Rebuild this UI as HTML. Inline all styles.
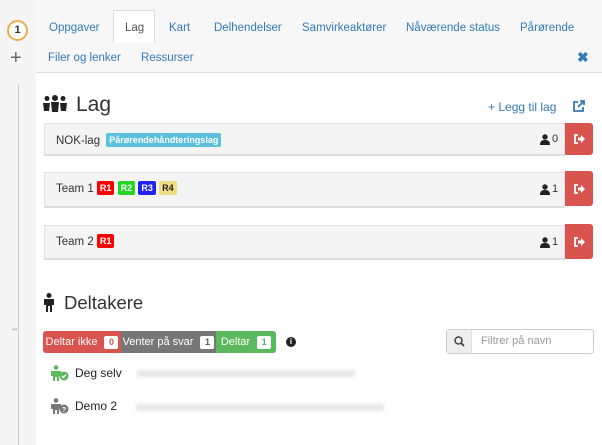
<!DOCTYPE html>
<html><head><meta charset="utf-8"><style>
*{box-sizing:border-box;margin:0;padding:0}
body{width:602px;height:445px;overflow:hidden;background:#fff;font-family:"Liberation Sans",Arial,sans-serif;position:relative;color:#333}
.a{position:absolute}
.side{left:0;top:0;width:36px;height:445px;background:#f5f5f5}
.hdr{left:36px;top:0;width:566px;height:73px;background:#f7f7f7;border-bottom:1px solid #ddd}
.tab{font-size:11.5px;color:#337ab7;top:22px;white-space:nowrap}
.row{left:44px;width:521px;background:#f4f4f4;border:1px solid #e3e3e3;border-bottom:2px solid #ddd}
.btn{left:565px;width:28px;background:#d9534f;border-radius:0 3px 3px 0;display:flex;align-items:center;justify-content:center}
.lbl{color:#fff;font-size:9px;font-weight:bold;border-radius:2px;padding:2px 3px;display:inline-block;vertical-align:1px;line-height:10px}
.rt{font-size:11.5px;color:#333;white-space:nowrap}
.cnt{font-size:11px;left:540px;display:flex;align-items:center;gap:2px}
.blur{height:7px;background:#e8e8e8;filter:blur(1.5px)}
.seg{display:flex;align-items:center;justify-content:center;gap:7px;white-space:nowrap}
.bg{display:inline-block;background:#fff;color:#555;font-size:9px;font-weight:bold;width:14px;height:13px;line-height:13px;text-align:center;border-radius:2px}
</style></head><body>
<div class="a side"></div>
<div class="a" style="left:18px;top:84px;width:1px;height:361px;background:#ccc"></div>
<div class="a" style="left:7px;top:20px;width:21px;height:21px;border:2px solid #f0ad4e;border-radius:50%;background:#fff;font-size:11px;font-weight:bold;text-align:center;line-height:17px">1</div>
<div class="a" style="left:10px;top:48px;font-size:20px;color:#666;line-height:20px">+</div>
<div class="a" style="left:12px;top:325px;font-size:8px;color:#bbb">••</div>
<div class="a hdr"></div>
<div class="a" style="left:113px;top:10px;width:42px;height:33px;background:#fff;border:1px solid #ddd;border-bottom:none"></div>
<div class="a tab" style="left:49px">Oppgaver</div>
<div class="a tab" style="left:125px;color:#555">Lag</div>
<div class="a tab" style="left:169px">Kart</div>
<div class="a tab" style="left:214px">Delhendelser</div>
<div class="a tab" style="left:302px">Samvirkeaktører</div>
<div class="a tab" style="left:406px">Nåværende status</div>
<div class="a tab" style="left:520px">Pårørende</div>
<div class="a tab" style="left:48px;top:52px">Filer og lenker</div>
<div class="a tab" style="left:141px;top:52px">Ressurser</div>
<div class="a" style="left:577px;top:49px;color:#337ab7;font-size:14px;font-weight:bold">✖</div>
<svg class="a" style="left:43px;top:95px" width="24" height="17" viewBox="0 0 24 17"><g fill="#222"><circle cx="4" cy="3.5" r="2.5"/><circle cx="12" cy="3" r="3"/><circle cx="20" cy="3.5" r="2.5"/><path d="M0 8h7l-1 8H1zM17 8h7l-1 8h-5zM8 7h8l-1 10H9z"/></g></svg>
<div class="a" style="left:76px;top:93px;font-size:21px">Lag</div>
<div class="a" style="left:488px;top:100px;font-size:12px;color:#337ab7">+ Legg til lag</div>
<svg class="a" style="left:572px;top:100px" width="13" height="13" viewBox="0 0 13 13" fill="none" stroke="#337ab7" stroke-width="1.8"><path d="M6 2H2v9h9V7"/><path d="M6 7l6-6M8 1h4v4"/></svg>
<svg width="0" height="0" style="position:absolute"><defs>
<g id="u"><circle cx="5" cy="3" r="2.7" fill="#222"/><path d="M0 11c0-4 2-5 5-5s5 1 5 5z" fill="#222"/></g>
<g id="x"><path d="M5 2H2v8h3" stroke="#fff" stroke-width="1.8" fill="none"/><path d="M5 4.5h3V2l4 4-4 4V7.5H5z" fill="#fff"/></g></defs></svg>
<div class="a row" style="top:123px;height:33px"></div>
<div class="a rt" style="left:56px;top:133px">NOK-lag <span class="lbl" style="background:#5bc0de;margin-left:3px">Pårørendehåndteringslag</span></div>
<div class="a cnt" style="top:133px"><svg width="10" height="11"><use href="#u"/></svg>0</div>
<div class="a btn" style="top:123px;height:32px"><svg width="13" height="12"><use href="#x"/></svg></div>
<div class="a row" style="top:172px;height:36px"></div>
<div class="a rt" style="left:56px;top:181px">Team 1 <span class="lbl" style="background:#f00">R1</span> <span class="lbl" style="background:#1fd81f">R2</span> <span class="lbl" style="background:#2222ee">R3</span> <span class="lbl" style="background:#f0dc82;color:#222">R4</span></div>
<div class="a cnt" style="top:183px"><svg width="10" height="11"><use href="#u"/></svg>1</div>
<div class="a btn" style="top:171px;height:35px"><svg width="13" height="12"><use href="#x"/></svg></div>
<div class="a row" style="top:225px;height:35px"></div>
<div class="a rt" style="left:56px;top:234px">Team 2 <span class="lbl" style="background:#f00">R1</span></div>
<div class="a cnt" style="top:236px"><svg width="10" height="11"><use href="#u"/></svg>1</div>
<div class="a btn" style="top:224px;height:35px"><svg width="13" height="12"><use href="#x"/></svg></div>
<svg class="a" style="left:43px;top:293px" width="12" height="19" viewBox="0 0 12 19"><g fill="#222"><circle cx="6" cy="2.5" r="2.5"/><path d="M1 6h10v6H9v7H7v-6H5v6H3v-7H1z"/></g></svg>
<div class="a" style="left:64px;top:292px;font-size:18.5px">Deltakere</div>
<div class="a" style="left:43px;top:331px;height:22px;display:flex;font-size:11px;color:#fff;border-radius:3px;overflow:hidden">
<div class="seg" style="background:#d9534f;width:78px">Deltar ikke<span class="bg" style="color:#d9534f">0</span></div>
<div class="seg" style="background:#777;width:95px">Venter på svar<span class="bg">1</span></div>
<div class="seg" style="background:#5cb85c;width:60px">Deltar<span class="bg" style="color:#5cb85c">1</span></div>
</div>
<div class="a" style="left:286px;top:337px;width:10px;height:10px;border-radius:50%;background:#222;color:#fff;font-size:8px;text-align:center;line-height:10px;font-weight:bold">i</div>
<div class="a" style="left:446px;top:329px;width:148px;height:25px;border:1px solid #ccc;border-radius:3px;background:#fff"></div>
<svg class="a" style="left:447px;top:330px" width="25" height="23"><rect width="25" height="23" fill="#eee"/><line x1="25" y1="0" x2="25" y2="23" stroke="#ccc"/><circle cx="11.5" cy="10.5" r="3.5" fill="none" stroke="#444" stroke-width="1.5"/><path d="M14 13l3 3" stroke="#444" stroke-width="1.8"/></svg>
<div class="a" style="left:481px;top:335px;font-size:11px;color:#999">Filtrer på navn</div>
<svg class="a" style="left:51px;top:365px" width="18" height="16"><circle cx="5" cy="2.5" r="2.3" fill="#5cb85c"/><path d="M0 6h10v5H8v5H6v-4H4v4H2v-5H0z" fill="#5cb85c"/><circle cx="13" cy="11" r="4.5" fill="#5cb85c"/><path d="M11 11l1.5 1.5L15 9.5" stroke="#fff" stroke-width="1.3" fill="none"/></svg>
<div class="a" style="left:75px;top:366px;font-size:12px;color:#222">Deg selv</div>
<div class="a blur" style="left:137px;top:370px;width:218px"></div>
<svg class="a" style="left:51px;top:398px" width="18" height="16"><circle cx="5" cy="2.5" r="2.3" fill="#777"/><path d="M0 6h10v5H8v5H6v-4H4v4H2v-5H0z" fill="#777"/><circle cx="13" cy="11" r="4.5" fill="#777"/><text x="13" y="14" font-size="7" font-weight="bold" fill="#fff" text-anchor="middle" font-family="Liberation Sans">?</text></svg>
<div class="a" style="left:75px;top:399px;font-size:12px;color:#222">Demo 2</div>
<div class="a blur" style="left:136px;top:404px;width:248px"></div>
</body></html>
